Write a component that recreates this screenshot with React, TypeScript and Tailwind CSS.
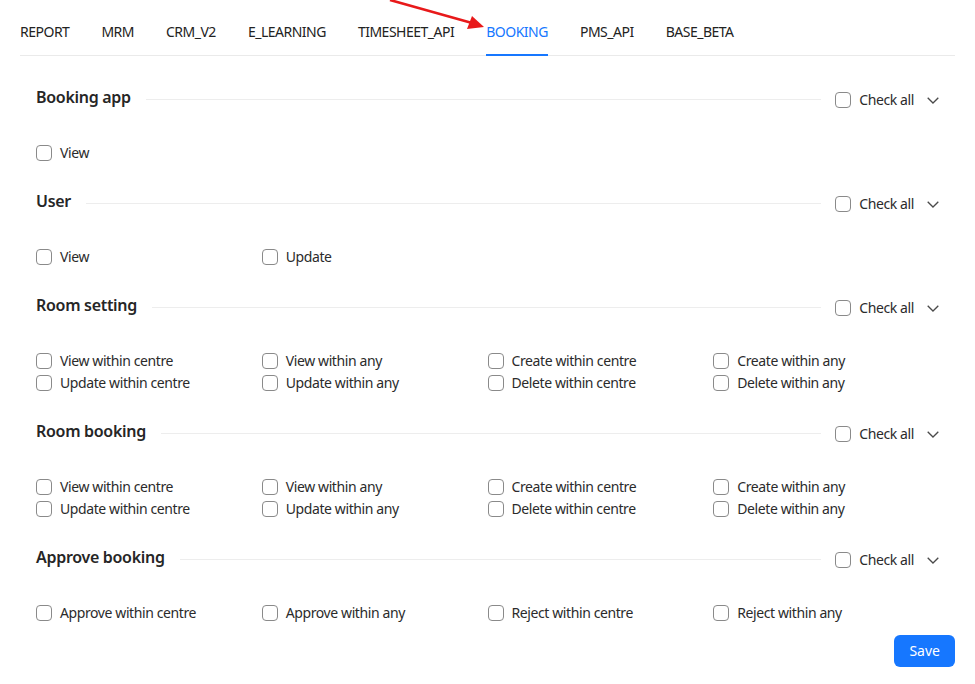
import React from "react";

const tabs = ["REPORT", "MRM", "CRM_V2", "E_LEARNING", "TIMESHEET_API", "BOOKING", "PMS_API", "BASE_BETA"];

interface Section {
  title: string;
  perms: string[];
}

const sections: Section[] = [
  { title: "Booking app", perms: ["View"] },
  { title: "User", perms: ["View", "Update"] },
  {
    title: "Room setting",
    perms: [
      "View within centre",
      "View within any",
      "Create within centre",
      "Create within any",
      "Update within centre",
      "Update within any",
      "Delete within centre",
      "Delete within any",
    ],
  },
  {
    title: "Room booking",
    perms: [
      "View within centre",
      "View within any",
      "Create within centre",
      "Create within any",
      "Update within centre",
      "Update within any",
      "Delete within centre",
      "Delete within any",
    ],
  },
  {
    title: "Approve booking",
    perms: ["Approve within centre", "Approve within any", "Reject within centre", "Reject within any"],
  },
];

function Box({ label }: { label: string }) {
  return (
    <label className="flex items-center gap-2 h-[22px] text-sm text-[#2b2b2b] tracking-[-0.4px] cursor-pointer">
      <span className="w-4 h-4 rounded-[4px] border border-[#8a8a8a] bg-white shrink-0" />
      <span>{label}</span>
    </label>
  );
}

function Chevron() {
  return (
    <svg width="12" height="7" viewBox="0 0 12 7" fill="none" className="ml-[13px]">
      <polyline points="0.7,0.7 6,6 11.3,0.7" stroke="#4a4a4a" strokeWidth="1.3" />
    </svg>
  );
}

export default function App() {
  return (
    <div
      className="relative w-[975px] h-[684px] bg-white px-5 overflow-hidden"
      style={{ fontFamily: '"Segoe UI", "Noto Sans", sans-serif' }}
    >
      {/* annotation arrow */}
      <svg className="absolute left-0 top-0 pointer-events-none" width="500" height="40">
        <line x1="390" y1="0" x2="472" y2="23" stroke="#e8191a" strokeWidth="2.6" />
        <polygon points="484,27 467,29 472,16" fill="#e8191a" />
      </svg>

      {/* tabs */}
      <div className="flex gap-8 pt-[9px] border-b border-[#eaeaea]">
        {tabs.map((t) => (
          <div
            key={t}
            className={
              t === "BOOKING"
                ? "pt-3 pb-[11px] text-sm leading-[22px] tracking-[-0.5px] text-[#1677ff] border-b-2 border-[#1677ff] -mb-px"
                : "pt-3 pb-[11px] text-sm leading-[22px] tracking-[-0.5px] text-[#222] border-b-2 border-transparent -mb-px"
            }
          >
            {t}
          </div>
        ))}
      </div>

      {/* sections */}
      <div className="px-4 pt-[29px]">
        {sections.map((s) => (
          <div key={s.title} className="mb-[25px]">
            <div className="flex items-center h-6">
              <div className="text-base font-semibold leading-6 tracking-[-0.3px] text-[#262626]">{s.title}</div>
              <div className="flex-1 h-px bg-[#ededed] ml-[15px] mr-[14px] mt-1" />
              <div className="flex items-center translate-y-[3px]">
                <Box label="Check all" />
                <Chevron />
              </div>
            </div>
            <div className="grid grid-cols-4 mt-[33px]">
              {s.perms.map((p, i) => (
                <Box key={s.title + i} label={p} />
              ))}
            </div>
          </div>
        ))}
      </div>

      <div className="absolute right-5 top-[635px]">
        <button className="h-8 px-[15px] rounded-md bg-[#1677ff] text-white text-sm">Save</button>
      </div>
    </div>
  );
}
